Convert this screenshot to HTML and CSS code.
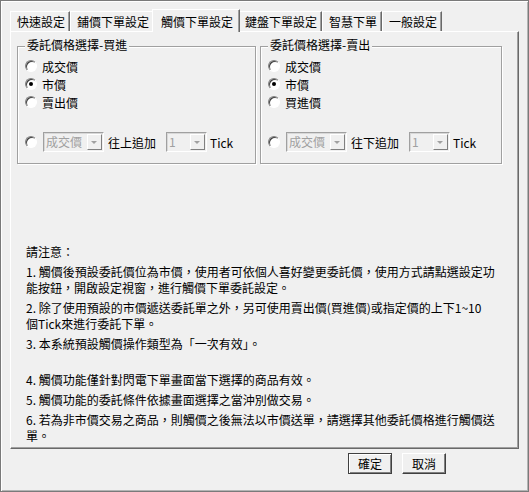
FILE: index.html
```html
<!DOCTYPE html>
<html lang="zh-Hant">
<head>
    <meta charset="UTF-8">
    <title>觸價下單設定</title>
    <link rel="stylesheet" href="styles.css">
</head>
<body>
    <div class="window">
        <div class="tabs">
            <div class="tab">快速設定</div>
            <div class="tab">鋪價下單設定</div>
            <div class="tab tab-active">觸價下單設定</div>
            <div class="tab">鍵盤下單設定</div>
            <div class="tab">智慧下單</div>
            <div class="tab">一般設定</div>
        </div>
        <div class="panel">
            <div class="groups">
                <div class="group group-buy">
                    <div class="group-title">委託價格選擇-買進</div>
                    <div class="option"><span class="radio"></span>成交價</div>
                    <div class="option"><span class="radio radio-checked"></span>市價</div>
                    <div class="option"><span class="radio"></span>賣出價</div>
                    <div class="tick-row">
                        <span class="radio"></span>
                        <span class="combo combo-type"><span class="combo-text">成交價</span><span class="combo-btn"></span></span>
                        <span class="tick-label">往上追加</span>
                        <span class="combo combo-num"><span class="combo-text">1</span><span class="combo-btn"></span></span>
                        <span class="tick-unit">Tick</span>
                    </div>
                </div>
                <div class="group group-sell">
                    <div class="group-title">委託價格選擇-賣出</div>
                    <div class="option"><span class="radio"></span>成交價</div>
                    <div class="option"><span class="radio radio-checked"></span>市價</div>
                    <div class="option"><span class="radio"></span>買進價</div>
                    <div class="tick-row">
                        <span class="radio"></span>
                        <span class="combo combo-type"><span class="combo-text">成交價</span><span class="combo-btn"></span></span>
                        <span class="tick-label">往下追加</span>
                        <span class="combo combo-num"><span class="combo-text">1</span><span class="combo-btn"></span></span>
                        <span class="tick-unit">Tick</span>
                    </div>
                </div>
            </div>
            <div class="notes">
                <p>請注意：</p>
                <p>1. 觸價後預設委託價位為市價，使用者可依個人喜好變更委託價，使用方式請點選設定功<br>能按鈕，開啟設定視窗，進行觸價下單委託設定。</p>
                <p>2. 除了使用預設的市價遞送委託單之外，另可使用賣出價(買進價)或指定價的上下1~10<br>個Tick來進行委託下單。</p>
                <p class="note-gap">3. 本系統預設觸價操作類型為「一次有效」。</p>
                <p>4. 觸價功能僅針對閃電下單畫面當下選擇的商品有效。</p>
                <p>5. 觸價功能的委託條件依據畫面選擇之當沖別做交易。</p>
                <p>6. 若為非市價交易之商品，則觸價之後無法以市價送單，請選擇其他委託價格進行觸價送<br>單。</p>
            </div>
        </div>
        <div class="actions">
            <button class="btn btn-default">確定</button>
            <button class="btn">取消</button>
        </div>
    </div>
</body>
</html>
```

FILE: styles.css
```css
body {
    margin: 0;
    background-color: #f0f0f0;
    font-family: "Noto Sans CJK TC", "Noto Sans", sans-serif;
    font-size: 12px;
    color: #000;
}
.window {
    width: 529px;
    height: 492px;
    box-sizing: border-box;
    border: 1px solid #7a7a7a;
    box-shadow: inset 1px 1px 0 #fff, inset -1px -1px 0 #b4b4b4;
    padding-top: 8px;
}

/* tabs */
.tabs {
    display: flex;
    align-items: flex-end;
    margin-left: 9px;
}
.tab {
    line-height: 19px;
    padding: 0 4px 0 6px;
    border: 1px solid #fff;
    border-right-color: #696969;
    border-bottom: 0;
    box-shadow: inset -1px 0 0 #a0a0a0;
    white-space: nowrap;
}
.tab-active {
    position: relative;
    z-index: 1;
    padding: 2px 6px 1px 8px;
    margin: 0 -2px -1px -2px;
    background-color: #f0f0f0;
}

/* panel */
.panel {
    height: 418px;
    box-sizing: border-box;
    margin: 0 9px;
    padding: 14px 0 0 6px;
    border: 1px solid;
    border-color: #fff #696969 #696969 #fff;
    box-shadow: inset -1px -1px 0 #a0a0a0;
}
.groups {
    display: flex;
    gap: 4px;
}
.group {
    height: 118px;
    box-sizing: border-box;
    padding-left: 7px;
    border: 1px solid #a0a0a0;
    box-shadow: 1px 1px 0 #fff, inset 1px 1px 0 #fff;
}
.group-buy {
    width: 239px;
}
.group-sell {
    width: 242px;
}
.group-title {
    display: table;
    margin-top: -10px;
    padding: 0 2px;
    line-height: 16px;
    background-color: #f0f0f0;
}
.option {
    display: flex;
    align-items: center;
    height: 18px;
}
.group-title + .option {
    margin-top: 4px;
}
.radio {
    position: relative;
    flex: none;
    width: 12px;
    height: 12px;
    box-sizing: border-box;
    margin-right: 5px;
    border-radius: 50%;
    border: 1px solid;
    border-color: #808080 #fff #fff #808080;
    box-shadow: inset 1px 1px 0 #404040;
    background-color: #fff;
}
.radio-checked::after {
    content: "";
    position: absolute;
    left: 3px;
    top: 3px;
    width: 4px;
    height: 4px;
    border-radius: 50%;
    background-color: #000;
}
.tick-row {
    display: flex;
    align-items: center;
    height: 20px;
    margin-top: 21px;
}
.tick-row .radio {
    margin-right: 6px;
}
.combo {
    display: flex;
    height: 20px;
    box-sizing: border-box;
    border: 1px solid;
    border-color: #a0a0a0 #fff #fff #a0a0a0;
    box-shadow: inset 1px 1px 0 #d8d8d8;
}
.combo-type {
    width: 61px;
}
.combo-num {
    width: 41px;
    margin-left: 10px;
}
.combo-text {
    flex: 1;
    padding-left: 2px;
    line-height: 18px;
    color: #a0a0a0;
}
.combo-btn {
    position: relative;
    width: 15px;
    margin: 1px 1px 1px 0;
    box-sizing: border-box;
    border: 1px solid;
    border-color: #fff #808080 #808080 #fff;
    background-color: #f0f0f0;
}
.combo-btn::after {
    content: "";
    position: absolute;
    left: 3px;
    top: 6px;
    border-style: solid;
    border-width: 3px 3px 0 3px;
    border-color: #a0a0a0 transparent transparent transparent;
}
.tick-label {
    margin-left: 4px;
}
.tick-unit {
    margin-left: 3px;
}

/* notes */
.notes {
    margin-top: 80px;
    padding-left: 9px;
}
.notes p {
    margin: 0 0 4px;
    line-height: 16px;
}
.notes .note-gap {
    margin-bottom: 20px;
}

/* buttons */
.actions {
    display: flex;
    justify-content: flex-end;
    gap: 10px;
    margin: 4px 82px 0 0;
}
.btn {
    width: 44px;
    height: 21px;
    box-sizing: border-box;
    padding: 0;
    font: inherit;
    line-height: 17px;
    color: #000;
    background-color: #f0f0f0;
    border: 1px solid;
    border-color: #fff #404040 #404040 #fff;
    box-shadow: inset -1px -1px 0 #808080;
}
.btn-default {
    border-color: #404040;
    box-shadow: inset 1px 1px 0 #fff, inset -1px -1px 0 #808080;
}
```
